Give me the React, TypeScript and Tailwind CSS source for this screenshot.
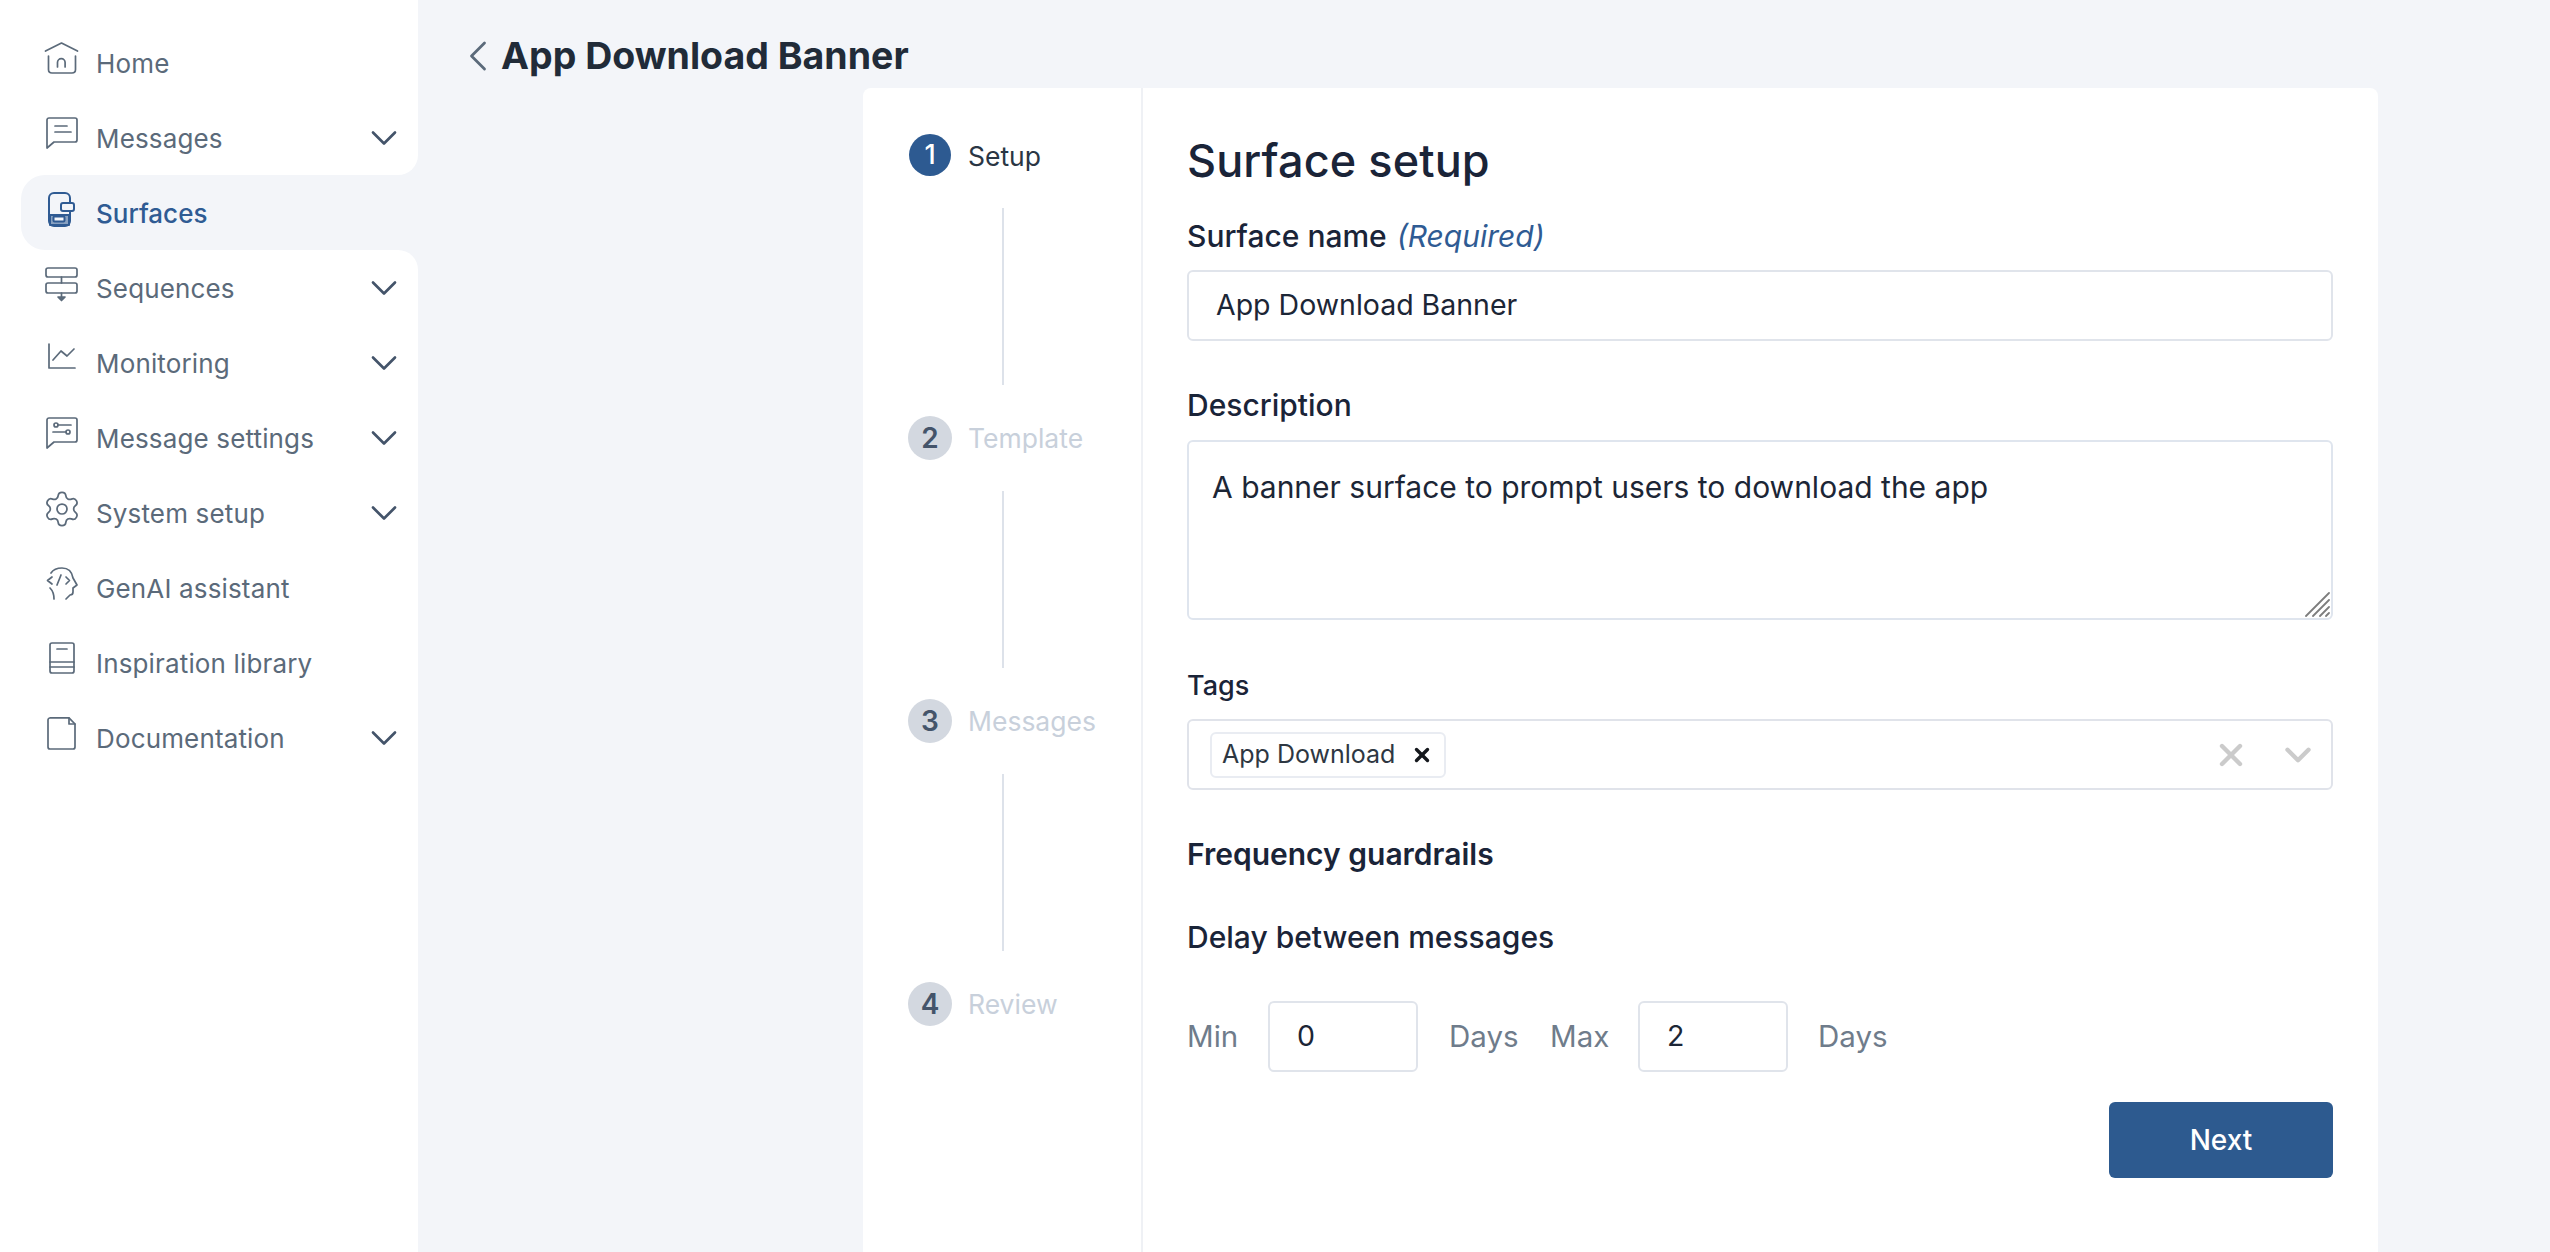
import React from "react";
import { Settings, X, ChevronDown, ChevronLeft } from "lucide-react";

const ink = "#5b6a7a";

function Svg({ children, color = ink, sw = 1.7 }: { children: React.ReactNode; color?: string; sw?: number }) {
  return (
    <svg width="33" height="33" viewBox="0 0 33 33" fill="none" stroke={color} strokeWidth={sw} strokeLinecap="round" strokeLinejoin="round" className="mb-[8px] shrink-0 overflow-visible">
      {children}
    </svg>
  );
}

const HomeIcon = () => (
  <Svg>
    <path d="M0.5 9 L16.5 1 L32.5 9" />
    <path d="M3.5 14 V27.5 Q3.5 31 7 31 H27 Q30.5 31 30.5 27.5 V14" />
    <path d="M12.5 25 V20.5 a3.8 3.8 0 0 1 7.6 0 V25" />
  </Svg>
);
const Bubble = () => <path d="M4 1 H30 a2 2 0 0 1 2 2 V23 a2 2 0 0 1 -2 2 H9 L2 31 V3 a2 2 0 0 1 2 -2 Z" />;
const MessagesIcon = () => (
  <Svg>
    <Bubble />
    <path d="M10 9 H22 M10 15 H26" />
  </Svg>
);
const SurfacesIcon = () => (
  <Svg color="#2f5b93" sw={2}>
    <rect x="4" y="1" width="21" height="33" rx="5" />
    <path d="M5 23 H24 V33 H5 Z" fill="#2f5b93" fillOpacity="0.55" />
    <rect x="8.5" y="24.5" width="11" height="5" rx="1" fill="#f3f5f9" />
    <rect x="16" y="11" width="13" height="8" rx="2" fill="#f3f5f9" />
  </Svg>
);
const SequencesIcon = () => (
  <Svg>
    <rect x="1" y="1" width="31" height="9" rx="2" />
    <rect x="1" y="16" width="31" height="10" rx="2" />
    <path d="M16.5 10 V16 M16.5 26 V32" />
    <path d="M13 30 H20 L16.5 33.5 Z" fill={ink} />
  </Svg>
);
const MonitoringIcon = () => (
  <Svg>
    <path d="M4 2 V26 H30" />
    <path d="M8 18 L16 9 L22 14 L29 7" />
  </Svg>
);
const MessageSettingsIcon = () => (
  <Svg>
    <Bubble />
    <path d="M13 8 H26 M8 15 H21" />
    <circle cx="11" cy="8" r="2" />
    <circle cx="23" cy="15" r="2" />
  </Svg>
);
const SystemIcon = () => (
  <span className="mb-[8px] flex h-[33px] w-[33px] shrink-0 items-center justify-center">
    <Settings size={40} strokeWidth={1.05} color={ink} className="shrink-0" />
  </span>
);
const GenAiIcon = () => (
  <Svg>
    <path d="M6 6 C8 3 12 1 17 1 C23 1 27 5 28 11 L32 18 L28 21 V25 Q28 28 25 28 L21 32" />
    <path d="M5 21 C8 24 9 27 9 32" />
    <path d="M7 10 L2.5 13.5 L7 17 M12 18 L16 8 M21 10 L24.5 13.5 L21 17" />
  </Svg>
);
const BookIcon = () => (
  <Svg>
    <rect x="5" y="1" width="24" height="30" rx="2" />
    <path d="M5 20 H29 M5 25 H29 M12 7 H22" />
  </Svg>
);
const DocIcon = () => (
  <Svg>
    <path d="M5 0.8 H24 L30 7 V30 a2 2 0 0 1 -2 2 H5 a2 2 0 0 1 -2 -2 V3 a2 2 0 0 1 2 -2 Z" />
    <path d="M24 1 V7 H30" />
  </Svg>
);

function NavItem({ icon, label, chevron }: { icon: React.ReactNode; label: string; chevron?: boolean }) {
  return (
    <div className="flex h-[75px] items-center pl-[45px] pr-[22px]">
      {icon}
      <span className="ml-[18px] flex-1 pt-[2px] text-[26px] tracking-[0.15px] text-[#5b6a7a]">{label}</span>
      {chevron && <ChevronDown size={44} strokeWidth={1.45} color="#44546a" className="-mr-[10px] shrink-0" />}
    </div>
  );
}

function Sidebar() {
  return (
    <div className="flex w-[418px] shrink-0 flex-col">
      <div className="rounded-br-[20px] bg-white pt-[25px]">
        <NavItem icon={<HomeIcon />} label="Home" />
        <NavItem icon={<MessagesIcon />} label="Messages" chevron />
      </div>
      <div className="bg-white pl-[21px]">
        <div className="flex h-[75px] items-center rounded-l-[24px] bg-[#f3f5f9] pl-[24px]">
          <SurfacesIcon />
          <span className="ml-[18px] pt-[2px] text-[26px] font-medium text-[#2f5b93]">Surfaces</span>
        </div>
      </div>
      <div className="flex-1 rounded-tr-[20px] bg-white">
        <NavItem icon={<SequencesIcon />} label="Sequences" chevron />
        <NavItem icon={<MonitoringIcon />} label="Monitoring" chevron />
        <NavItem icon={<MessageSettingsIcon />} label="Message settings" chevron />
        <NavItem icon={<SystemIcon />} label="System setup" chevron />
        <NavItem icon={<GenAiIcon />} label="GenAI assistant" />
        <NavItem icon={<BookIcon />} label="Inspiration library" />
        <NavItem icon={<DocIcon />} label="Documentation" chevron />
      </div>
    </div>
  );
}

function Step({ n, label, active, line }: { n: number; label: string; active?: boolean; line?: boolean }) {
  return (
    <div className="flex flex-col">
      <div className="flex h-[44px] items-center">
        <div className={active ? "ml-[1px] flex h-[42px] w-[42px] items-center justify-center rounded-full bg-[#2d5a91] text-[27px] font-medium text-white" : "flex h-[44px] w-[44px] items-center justify-center rounded-full bg-[#d3d8e0] text-[28px] font-semibold text-[#44546a]"}>
          {n}
        </div>
        <span className={active ? "ml-[17px] pt-[4px] text-[26.5px] text-[#2a3644]" : "ml-[16px] pt-[1px] text-[26.5px] text-[#c8d0db]"}>{label}</span>
      </div>
      {line && <div className="my-[31px] ml-[94px] h-[177px] w-[2px] bg-[#dde2ea]" />}
    </div>
  );
}

const field = "flex items-center rounded-[6px] border-2 border-[#e0e4eb] bg-white text-[28.5px] text-[#1c2636]";
const label = "flex h-[34px] items-center text-[30px] font-medium text-[#1a2438]";

function Form() {
  return (
    <div className="flex flex-1 flex-col pl-[44px] pr-[45px] pt-[49px]">
      <div className="flex h-[48px] items-center text-[45px] font-medium tracking-[0.1px] text-[#1a2438]">Surface setup</div>

      <div className={`${label} mt-[34px]`}>
        Surface name<span className="ml-[10px] font-normal italic text-[#2f5b93]">(Required)</span>
      </div>
      <div className={`${field} mt-[17px] h-[71px] pl-[27px]`}>App Download Banner</div>

      <div className={`${label} mt-[47px]`}>Description</div>
      <div className="relative mt-[18px] h-[180px] rounded-[6px] border-2 border-[#dfe5ee] bg-white pl-[23px] pt-[27px] text-[30px] leading-[36px] text-[#1c2636]">
        A banner surface to prompt users to download the app
        <svg width="26" height="26" viewBox="0 0 26 26" className="absolute bottom-0 right-0" stroke="#7d7d7d" strokeWidth="1.8" strokeLinecap="round">
          <path d="M1 24 L24 1 M8 24 L24 8 M15 24 L24 15 M21 24 L24 21" />
        </svg>
      </div>

      <div className="mt-[49px] flex h-[34px] items-center text-[27px] font-medium text-[#1a2438]">Tags</div>
      <div className="mt-[16px] flex h-[71px] items-center rounded-[6px] border-2 border-[#e0e3ea] bg-white pl-[21px] pr-[12px]">
        <div className="flex h-[46px] w-[236px] items-center rounded-[6px] border-2 border-[#e9ecf2] pl-[10px] text-[25px] text-[#2e3742]">
          App Download
          <X size={22} strokeWidth={3.7} color="#15181d" className="ml-[16px]" />
        </div>
        <div className="flex-1" />
        <X size={36} strokeWidth={2.9} color="#cbcbcb" />
        <ChevronDown size={42} strokeWidth={2.5} color="#cbcbcb" className="ml-[28px]" />
      </div>

      <div className="mt-[47px] flex h-[34px] items-center text-[30px] font-semibold text-[#1a2438]">Frequency guardrails</div>
      <div className={`${label} mt-[49px]`}>Delay between messages</div>

      <div className="mt-[47px] flex h-[71px] items-center text-[29.5px] text-[#6f7c8b]">
        <span className="w-[81px]">Min</span>
        <div className={`${field} h-[71px] w-[150px] pl-[27px]`}>0</div>
        <span className="ml-[31px] w-[70px]">Days</span>
        <span className="ml-[31px] w-[88px]">Max</span>
        <div className={`${field} h-[71px] w-[150px] pl-[27px]`}>2</div>
        <span className="ml-[30px]">Days</span>
      </div>

      <div className="mt-[30px] flex justify-end">
        <div className="flex h-[76px] w-[224px] items-center justify-center rounded-[6px] bg-[#2d5a8f] text-[28px] font-medium text-white">Next</div>
      </div>
    </div>
  );
}

export default function App() {
  return (
    <div className="flex h-screen w-full overflow-hidden bg-[#f3f5f9] font-['Inter',sans-serif]">
      <Sidebar />
      <div className="flex min-w-0 flex-1 flex-col">
        <div className="flex h-[88px] items-center pl-[34px] pt-[24px]">
          <ChevronLeft size={52} strokeWidth={1.3} color="#5b6a7a" className="shrink-0" />
          <span className="-ml-[3px] text-[37.5px] font-bold text-[#212b38]">App Download Banner</span>
        </div>
        <div className="ml-[445px] flex w-[1515px] flex-1 rounded-t-[8px] bg-white">
          <div className="w-[280px] shrink-0 border-r-2 border-[#eff1f5] pl-[45px] pt-[45px]">
            <Step n={1} label="Setup" active line />
            <Step n={2} label="Template" line />
            <Step n={3} label="Messages" line />
            <Step n={4} label="Review" />
          </div>
          <Form />
        </div>
      </div>
    </div>
  );
}
